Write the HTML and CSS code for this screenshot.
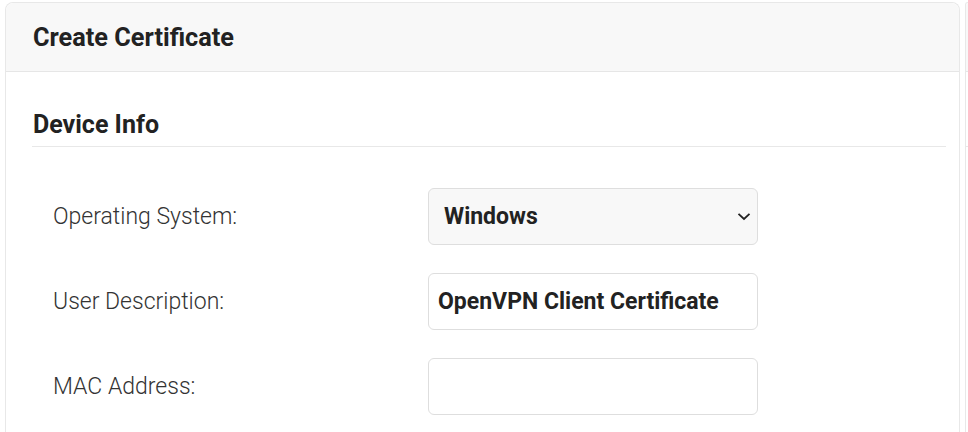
FILE: index.html
```html
<!DOCTYPE html>
<html>
<head>
<meta charset="utf-8">
<link rel="stylesheet" href="styles.css">
</head>
<body>
<div class="page">
  <section class="card main">
    <header class="card-head"><h1>Create Certificate</h1></header>
    <div class="card-body">
      <h2 class="section-title">Device Info</h2>
      <div class="form">
        <div class="row">
          <label class="lbl">Operating System:</label>
          <div class="field select">
            <span>Windows</span>
            <svg class="chev" width="14" height="9" viewBox="0 0 14 9"><path d="M1.5 1.8 L7 7 L12.5 1.8" fill="none" stroke="#222" stroke-width="1.8"/></svg>
          </div>
        </div>
        <div class="row">
          <label class="lbl">User Description:</label>
          <div class="field text"><span>OpenVPN Client Certificate</span></div>
        </div>
        <div class="row">
          <label class="lbl">MAC Address:</label>
          <div class="field text"></div>
        </div>
      </div>
    </div>
  </section>
  <section class="card side">
    <header class="card-head"></header>
    <div class="side-rule"></div>
  </section>
</div>
</body>
</html>
```
FILE: styles.css
```css
html, body { margin: 0; padding: 0; background: #fff; }
body { font-family: Roboto, "Noto Sans", Arial, sans-serif; color: #222; overflow: hidden; }
.page { display: flex; gap: 5px; padding: 2px 0 0 5px; height: 430px; overflow: hidden; }
.card { border: 1px solid #e8e8e8; border-bottom: none; border-radius: 8px 8px 0 0; background: #fff; }
.main { width: 953px; flex: none; }
.side { flex: 1; min-width: 0; border-right: none; border-radius: 8px 0 0 0; }
.card-head { background: #f8f8f8; height: 68px; border-bottom: 1px solid #e6e6e6; border-radius: 8px 8px 0 0; display: flex; align-items: center; padding-left: 27px; }
.side .card-head { border-radius: 8px 0 0 0; padding-left: 0; }
.card-head h1 { margin: 0; font-size: 25.3px; font-weight: 700; color: #222; }
.card-body { padding: 0 13px 0 26px; }
.section-title { margin: 0; padding-top: 39px; font-size: 25px; font-weight: 700; line-height: 28px; height: 35px; padding-left: 1px; border-bottom: 1px solid #e8e8e8; color: #222; }
.side-rule { margin-top: 74px; border-bottom: 1px solid #e8e8e8; }
.form { padding-top: 41px; display: flex; flex-direction: column; gap: 28px; }
.row { display: flex; align-items: center; height: 57px; }
.lbl { width: 375px; padding-left: 21px; font-size: 23px; font-weight: 300; color: #333; flex: none; }
.field { width: 328px; height: 55px; border: 1px solid #dedede; border-radius: 6px; display: flex; align-items: center; font-size: 23px; font-weight: 700; color: #222; box-sizing: content-box; }
.select { background: #f8f8f8; justify-content: space-between; }
.select span { padding-left: 15px; }
.chev { margin-right: 6px; }
.text { background: #fff; }
.text span { padding-left: 9px; }
```
